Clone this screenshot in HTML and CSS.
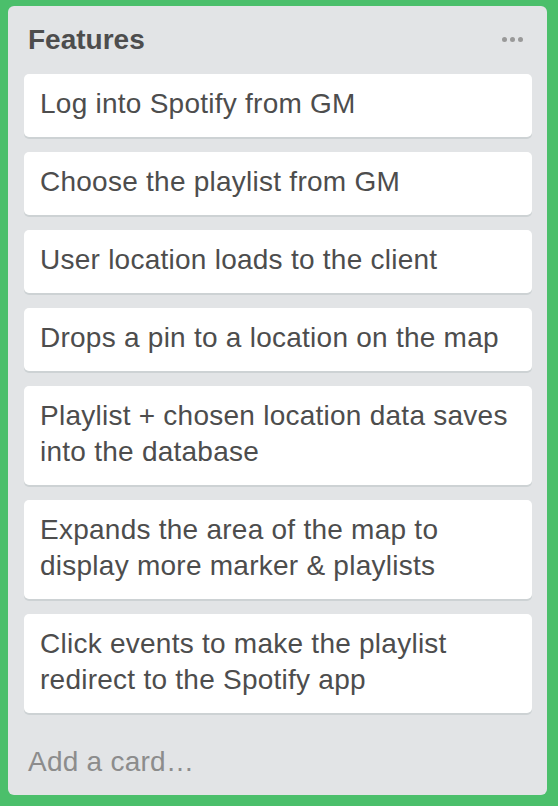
FILE: index.html
```html
<!DOCTYPE html>
<html>
<head>
<meta charset="utf-8">
<link rel="stylesheet" href="styles.css">
</head>
<body>
<div class="list">
  <div class="list-header">
    <h2 class="list-title">Features</h2>
    <span class="list-menu"><i></i><i></i><i></i></span>
  </div>
  <div class="cards">
    <div class="card">Log into Spotify from GM</div>
    <div class="card">Choose the playlist from GM</div>
    <div class="card">User location loads to the client</div>
    <div class="card">Drops a pin to a location on the map</div>
    <div class="card">Playlist + chosen location data saves into the database</div>
    <div class="card">Expands the area of the map to display more marker &amp; playlists</div>
    <div class="card">Click events to make the playlist redirect to the Spotify app</div>
  </div>
  <div class="add-card">Add a card…</div>
</div>
</body>
</html>
```

FILE: styles.css
```css
html, body {
  margin: 0;
  padding: 0;
}
body {
  background: #4bbf6b;
  width: 558px;
  height: 806px;
  padding: 6px 11px 11px 8px;
  box-sizing: border-box;
  font-family: "Liberation Sans", Arial, sans-serif;
}
.list {
  background: #e2e4e6;
  border-radius: 6px;
  height: 789px;
  box-sizing: border-box;
  padding: 0 15px 0 16px;
  display: flex;
  flex-direction: column;
}
.list-header {
  display: flex;
  align-items: center;
  justify-content: space-between;
  height: 68px;
  padding: 0 9px 0 4px;
}
.list-title {
  margin: 0;
  font-size: 28px;
  font-weight: bold;
  color: #4d4d4d;
}
.list-menu {
  display: flex;
  gap: 3px;
  margin-top: -2px;
}
.list-menu i {
  width: 5px;
  height: 5px;
  border-radius: 50%;
  background: #999;
}
.cards {
  display: flex;
  flex-direction: column;
  gap: 15px;
}
.card {
  background: #fff;
  border-radius: 5px;
  box-shadow: 0 2px 0 #cdd2d4;
  padding: 12px 16px 15px;
  font-size: 28px;
  line-height: 36px;
  letter-spacing: 0.25px;
  color: #4d4d4d;
}
.add-card {
  height: 82px;
  box-sizing: border-box;
  padding: 16px 4px 0;
  display: flex;
  align-items: center;
  font-size: 28px;
  letter-spacing: 0.25px;
  color: #8c8c8c;
}
```
